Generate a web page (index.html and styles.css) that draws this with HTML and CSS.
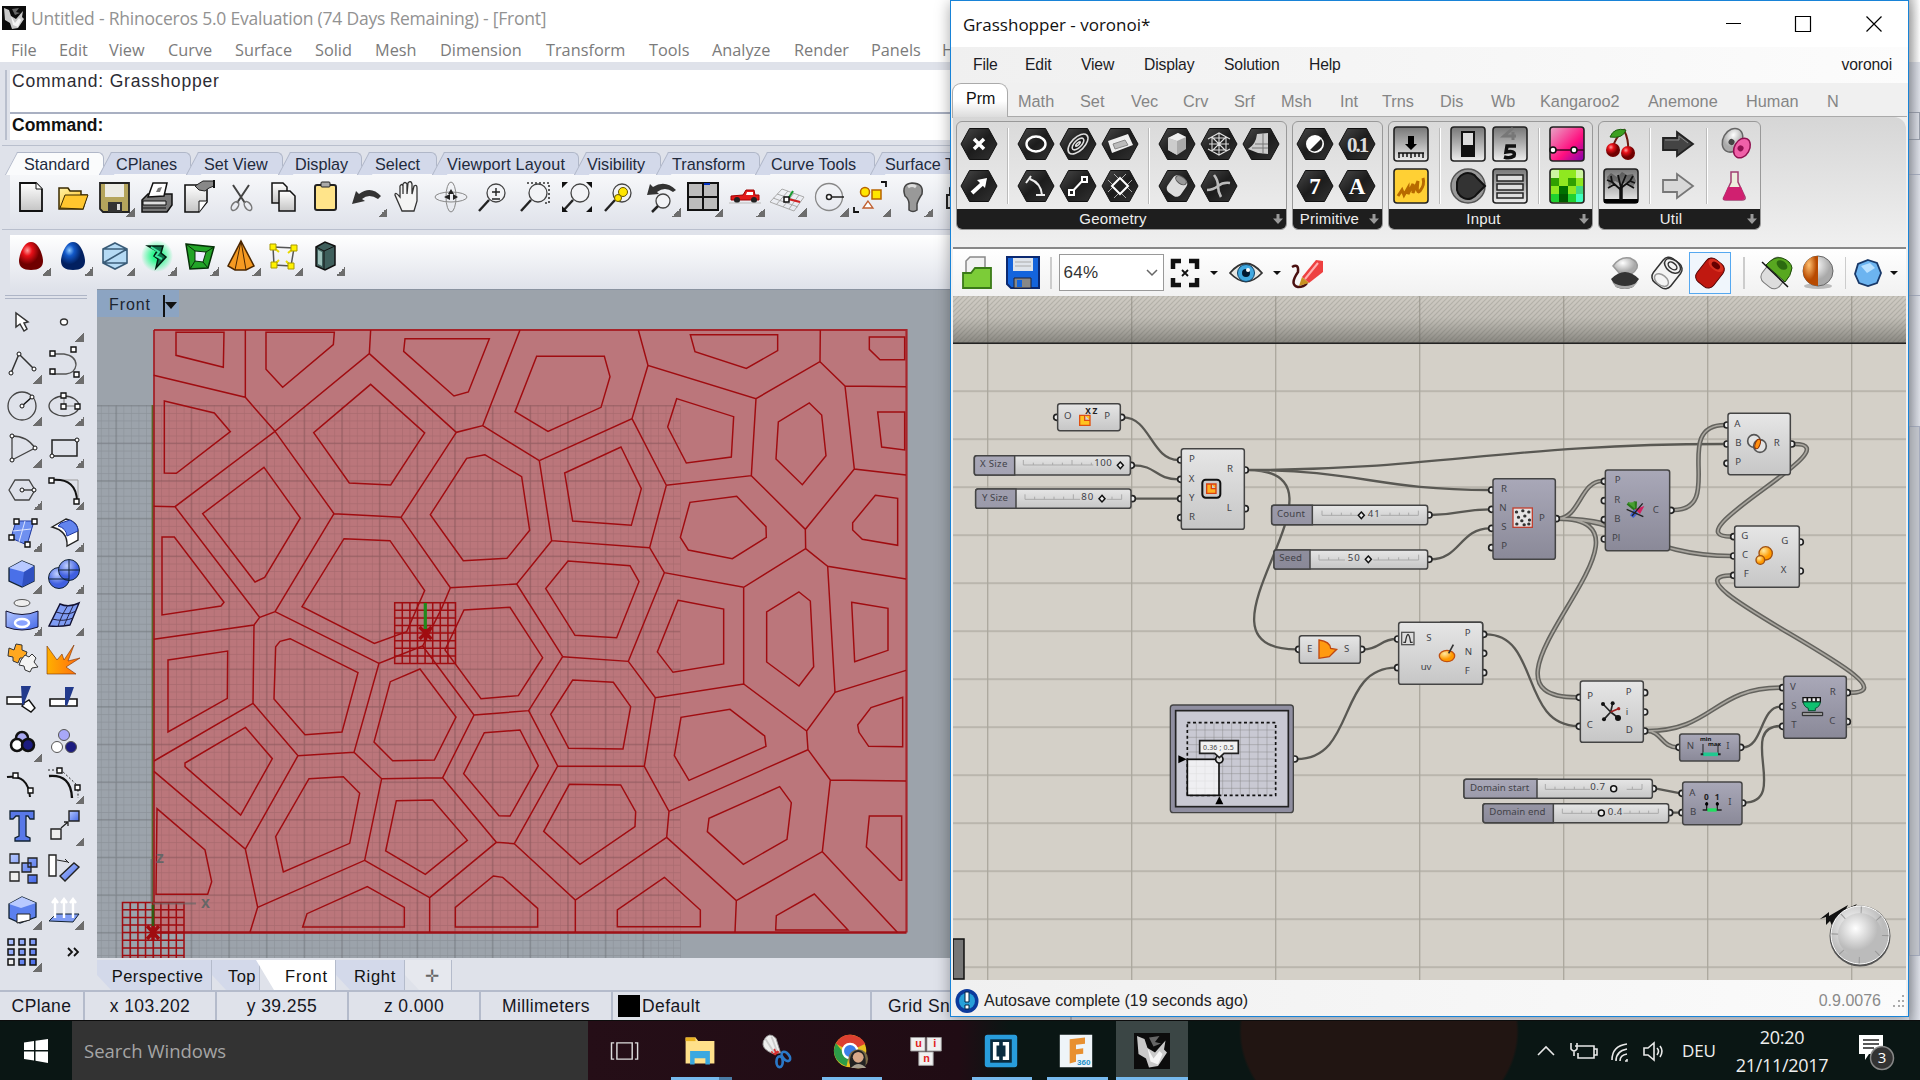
FILE: index.html
```html
<!DOCTYPE html>
<html lang="en">
<head>
<meta charset="utf-8">
<title>Rhinoceros and Grasshopper</title>
<link rel="stylesheet" href="styles.css">
</head>
<body>
<svg class="defs" width="0" height="0">
  <defs>
    <linearGradient id="nodeLight" x1="0" y1="0" x2="0" y2="1"><stop offset="0" stop-color="#e6e6e6"/><stop offset="1" stop-color="#c6c6c6"/></linearGradient>
    <linearGradient id="nodeDark" x1="0" y1="0" x2="0" y2="1"><stop offset="0" stop-color="#a9a8b8"/><stop offset="1" stop-color="#8a8998"/></linearGradient>
    <linearGradient id="hexFill" x1="0" y1="0" x2="1" y2="1"><stop offset="0" stop-color="#4a4a4a"/><stop offset=".5" stop-color="#1c1c1c"/><stop offset="1" stop-color="#333"/></linearGradient>
    <linearGradient id="btnGrey" x1="0" y1="0" x2="0" y2="1"><stop offset="0" stop-color="#777"/><stop offset=".45" stop-color="#aaa"/><stop offset="1" stop-color="#eee"/></linearGradient>
    <linearGradient id="steel" x1="0" y1="0" x2="0" y2="1"><stop offset="0" stop-color="#fff"/><stop offset="1" stop-color="#c4c4c4"/></linearGradient>
    <linearGradient id="blueFace" x1="0" y1="0" x2="1" y2="1"><stop offset="0" stop-color="#b5c8ff"/><stop offset="1" stop-color="#4468e8"/></linearGradient>
    <linearGradient id="gold" x1="0" y1="0" x2="1" y2="1"><stop offset="0" stop-color="#fff2a8"/><stop offset="1" stop-color="#ffb400"/></linearGradient>
    <linearGradient id="flame" x1="0" y1="0" x2="1" y2="0"><stop offset="0" stop-color="#ffb000"/><stop offset="1" stop-color="#ff6a10"/></linearGradient>
    <linearGradient id="pink" x1="0" y1="0" x2="1" y2="1"><stop offset="0" stop-color="#e8a8c8"/><stop offset=".6" stop-color="#ff1080"/><stop offset="1" stop-color="#8000b0"/></linearGradient>
    <radialGradient id="redBall" cx=".35" cy=".3"><stop offset="0" stop-color="#ff9a9a"/><stop offset=".4" stop-color="#e81018"/><stop offset="1" stop-color="#700000"/></radialGradient>
    <radialGradient id="blueBall" cx=".35" cy=".3"><stop offset="0" stop-color="#8cc8ff"/><stop offset=".4" stop-color="#1258c8"/><stop offset="1" stop-color="#022060"/></radialGradient>
    <radialGradient id="softBlue" cx=".4" cy=".3"><stop offset="0" stop-color="#c0d0ff"/><stop offset="1" stop-color="#4060e0"/></radialGradient>
    <radialGradient id="glow"><stop offset=".3" stop-color="#30f890"/><stop offset="1" stop-color="#30f89000"/></radialGradient>
    <radialGradient id="orangeBall" cx=".35" cy=".3"><stop offset="0" stop-color="#ffe9a0"/><stop offset="1" stop-color="#ff9a00"/></radialGradient>
    <radialGradient id="wheel" cx=".4" cy=".35"><stop offset="0" stop-color="#fff"/><stop offset="1" stop-color="#bbb"/></radialGradient>
    <radialGradient id="silver" cx=".4" cy=".3"><stop offset="0" stop-color="#fff"/><stop offset="1" stop-color="#aaa"/></radialGradient>
    <radialGradient id="amber" cx=".4" cy=".3"><stop offset="0" stop-color="#ffc070"/><stop offset="1" stop-color="#b84a00"/></radialGradient>
    <pattern id="minor" x="153.5" y="932.5" width="7.53" height="7.53" patternUnits="userSpaceOnUse"><path d="M0 0H7.53M0 0V7.53" stroke="#000" stroke-opacity=".1" stroke-width="1.2"/></pattern>
    <pattern id="major" x="152.9" y="931.9" width="37.65" height="37.65" patternUnits="userSpaceOnUse"><path d="M0 .8H37.65M.8 0V37.65" stroke="#000" stroke-opacity=".11" stroke-width="1.6"/></pattern>
    <pattern id="canvasGrid" x="987" y="390.5" width="144" height="48" patternUnits="userSpaceOnUse"><path d="M0 .7H144M.7 0V48" stroke="#8d8b80" stroke-opacity=".6" stroke-width="1.3"/></pattern>
    <pattern id="hatch" width="5" height="5" patternUnits="userSpaceOnUse"><path d="M-1 6L6 -1M-1 1L1 -1M4 6L6 4" stroke="#8a8980" stroke-opacity=".35" stroke-width="1.2"/></pattern>
    <linearGradient id="shade" x1="0" y1="0" x2="0" y2="1"><stop offset="0" stop-color="#5a5a55" stop-opacity=".05"/><stop offset=".45" stop-color="#5a5a55" stop-opacity=".14"/><stop offset="1" stop-color="#4a4a45" stop-opacity=".55"/></linearGradient>
    <symbol id="hex" viewBox="-21 -21 42 42"><path d="M-18 0L-9.500-15.500H9.500L18 0L9.500 15.500H-9.500Z" fill="url(#hexFill)" stroke="#111"/></symbol>
    <symbol id="rhino" viewBox="0 0 24 24"><path d="M0 0H24V24H0Z" fill="#0c0c0c"/><path d="M2 2L7 4L9 10L14 13L21 5L20 11L22 13L16 22L10 23L8 17L3 14Z" fill="#c9c9c9"/><path d="M9 10L13 17L17 12L19 14L16 21L11 19Z" fill="#f5f5f5"/><path d="M10 3L17 2L14 6L18 7L13 9Z" fill="#666"/></symbol>
    <symbol id="glass" viewBox="-21 -21 42 42"><circle cx="3" cy="-4" r="9" fill="#f2f3f6" stroke="#444" stroke-width="1.300"/><path d="M-4 3L-14 14" stroke="#222" stroke-width="2.400"/></symbol>
  </defs>
</svg>

<main class="rhino">
  <header class="r-title"><svg width="24" height="24"><use href="#rhino"/></svg><span>Untitled - Rhinoceros 5.0 Evaluation (74 Days Remaining) - [Front]</span></header>
  <nav class="r-menu"><span>File</span><span>Edit</span><span>View</span><span>Curve</span><span>Surface</span><span>Solid</span><span>Mesh</span><span>Dimension</span><span>Transform</span><span>Tools</span><span>Analyze</span><span>Render</span><span>Panels</span><span>Help</span></nav>
  <section class="command"><p>Command: Grasshopper</p><p class="prompt">Command:</p></section>
  <section class="band">
    <div class="r-tabs"><span class="on">Standard</span><span>CPlanes</span><span>Set View</span><span>Display</span><span>Select</span><span>Viewport Layout</span><span>Visibility</span><span>Transform</span><span>Curve Tools</span><span>Surface Tools</span></div>
    <div class="icons">
      <svg viewBox="-21 -21 42 42"><path d="M-11-14H5L11-8V14H-11Z" fill="url(#steel)" stroke="#111" stroke-width="1.800"/><path d="M5-14V-8H11" fill="#fff" stroke="#111"/></svg>
      <svg viewBox="-21 -21 42 42"><path d="M-14-9H-5L-3-6H8V-2L14-2L10 12H-14Z" fill="url(#gold)" stroke="#3a2a00" stroke-width="1.500"/><path d="M-13 11L-8-2H15L10 12Z" fill="#ffc62e" stroke="#3a2a00"/></svg>
      <svg class="more" viewBox="-21 -21 42 42"><path d="M-15-14H14V15H-12L-15 12Z" fill="#b5a55c" stroke="#222" stroke-width="1.800"/><path d="M-10-13H9V0H-10Z" fill="#ecebe4"/><path d="M-7 5H7V15H-7Z" fill="#333"/><path d="M2 7H5V13H2Z" fill="#ddd"/></svg>
      <svg viewBox="-21 -21 42 42"><path d="M-15 3L-9-3H15V8L10 15H-15Z" fill="#777" stroke="#111" stroke-width="1.500"/><path d="M-9 0L-4-14H10L7-1Z" fill="#fff" stroke="#111" stroke-width="1.500"/><path d="M-1-5L1-9L5-10L3-5Z" fill="#777"/><path d="M-14 4H9V8H-14ZM-14 11H9" fill="#ddd" stroke="#111"/></svg>
      <svg viewBox="-21 -21 42 42"><path d="M-14-12H8V5L0 15H-14Z" fill="url(#steel)" stroke="#111" stroke-width="1.600"/><path d="M-4-11L4-16H15V-11L10-9L6-6L0-7Z" fill="#888" stroke="#222"/><path d="M15-17V-9" stroke="#111" stroke-width="2"/><path d="M8 4H0V15" fill="#fff" stroke="#111"/></svg>
      <svg viewBox="-21 -21 42 42"><path d="M-8-12L4 6M8-12L-4 6" stroke="#444" stroke-width="2"/><ellipse cx="-6" cy="9" rx="3" ry="5" transform="rotate(35-6 9)" fill="none" stroke="#777" stroke-width="1.500"/><ellipse cx="7" cy="9" rx="3" ry="5" transform="rotate(-35 7 9)" fill="none" stroke="#777" stroke-width="1.500"/></svg>
      <svg viewBox="-21 -21 42 42"><g fill="url(#steel)" stroke="#111" stroke-width="1.500"><path d="M-11-14H0L4-10V6H-11Z"/><path d="M-4-6H7L12-1V14H-4Z"/></g></svg>
      <svg viewBox="-21 -21 42 42"><rect x="-10" y="-12" width="21" height="25" rx="2" fill="#ffe48a" stroke="#222" stroke-width="2"/><rect x="-4" y="-15" width="9" height="5" rx="1" fill="#aaa" stroke="#222"/></svg>
      <svg class="more" viewBox="-21 -21 42 42"><path d="M-15 7L-11-6L-8-3Q4-12 14-1L11 2Q2-4-5 2L-2 4Z" fill="#333"/></svg>
      <svg viewBox="-21 -21 42 42"><path d="M-7 14L-14-2Q-14-6-9 0V-11Q-7-14-6-11V-3V-13Q-4-16-2-13V-3L-1-14Q2-17 3-13L3-3L5-11Q8-13 8-9L8 4L5 14Z" fill="#f4f4f4" stroke="#333" stroke-width="1.300"/></svg>
      <svg viewBox="-21 -21 42 42"><ellipse rx="16" ry="5" fill="none" stroke="#888"/><ellipse rx="5" ry="15" fill="none" stroke="#888"/><path d="M-7 0L-1-3V3ZM0-8L-3-3H3ZM7 0L2-3V3Z" fill="#222"/></svg>
      <svg viewBox="-21 -21 42 42"><use href="#glass" x="-21" y="-21" width="42" height="42"/><path d="M-1-5H7M3-9V-1M-1 2H7" stroke="#222" stroke-width="1.400"/></svg>
      <svg viewBox="-21 -21 42 42"><use href="#glass" x="-21" y="-21" width="42" height="42"/><path d="M-8-14H14V6H8" fill="none" stroke="#333" stroke-width="1.600" stroke-dasharray="2 2"/></svg>
      <svg viewBox="-21 -21 42 42"><use href="#glass" x="-21" y="-21" width="42" height="42"/><path d="M-15-15H-9L-15-9ZM15-15H9L15-9ZM-15 15V9L-9 15ZM15 15H9L15 9Z" fill="#111"/></svg>
      <svg viewBox="-21 -21 42 42"><use href="#glass" x="-21" y="-21" width="42" height="42"/><circle cx="4" cy="-5" r="4.500" fill="#ffe600" stroke="#665500"/><circle cx="-1" cy="1" r="3.500" fill="#ffe600" stroke="#665500"/></svg>
      <svg class="more" viewBox="-21 -21 42 42"><circle cx="2" cy="4" r="7" fill="#f2f3f6" stroke="#444" stroke-width="1.300"/><path d="M-3 9L-9 15" stroke="#222" stroke-width="2.500"/><path d="M-14-2L-11-13L-8-10Q4-18 15-7L12-5Q4-11-4-5L-2-3Z" fill="#333"/></svg>
      <svg class="more" viewBox="-21 -21 42 42"><path d="M-15-14H15V13H-15Z" fill="#bcbcbc" stroke="#111" stroke-width="2"/><path d="M0-14V13M-15 0H15" stroke="#111" stroke-width="2"/><path d="M1-13H7" stroke="#0030c0" stroke-width="2"/></svg>
      <svg class="more" viewBox="-21 -21 42 42"><path d="M-14 3V-1L-2-2L1-7H9L10-2H14V3Z" fill="#e31b1b" stroke="#a00000"/><path d="M2-5H8V-2H1Z" fill="#fff"/><circle cx="-8" cy="3" r="3" fill="#222"/><circle cx="9" cy="3" r="3" fill="#222"/><path d="M-16 6H16" stroke="#bbb"/></svg>
      <svg class="more" viewBox="-21 -21 42 42"><path d="M-17 5L-5-8L17 0L7 14ZM-14 1L11 10M-10-3L14 5M-11 8L1-6M-4 10L7-4M2 12L12-2" fill="none" stroke="#aaa"/><path d="M1 2L6-6" stroke="#1a9a30" stroke-width="2"/><path d="M1 2L13 5" stroke="#d02020" stroke-width="2"/><path d="M-3 0H2V5H-3Z" fill="#fff" stroke="#111" stroke-width="1.500"/></svg>
      <svg class="more" viewBox="-21 -21 42 42"><circle r="13.500" fill="none" stroke="#888" stroke-width="1.300"/><path d="M0 0H15" stroke="#222" stroke-width="1.500"/><circle r="2.500" fill="#fff" stroke="#222" stroke-width="1.500"/></svg>
      <svg class="more" viewBox="-21 -21 42 42"><circle cx="-6" cy="-5" r="4.500" fill="#ffe600" stroke="#b86400" stroke-width="1.500"/><path d="M1-7H10V2H1Z" fill="#ffe600" stroke="#b86400" stroke-width="1.500"/><path d="M-3 4L-8 11H2Z" fill="#fff" stroke="#c06030" stroke-width="1.300"/><path d="M10-15H15V-10M-12 15H-17V10" fill="none" stroke="#111" stroke-width="1.800"/></svg>
      <svg class="more" viewBox="-21 -21 42 42"><path d="M-4 7Q-4 2-8-1Q-12-13-1-14Q11-14 9-3Q5 3 4 7V13Q0 16-4 13Z" fill="#999" stroke="#444" stroke-width="1.500"/><path d="M-5-10Q-1-13 3-10" stroke="#ddd" stroke-width="3" fill="none"/></svg>
      <svg viewBox="-21 -21 42 42"><path d="M-8-2H8V11H-8ZM-5-2V-9Q0-14 5-9V-2" fill="#ddd" stroke="#222" stroke-width="2"/></svg>
    </div>
  </section>
  <section class="band second">
    <div class="icons">
      <svg class="more" viewBox="-21 -21 42 42"><path d="M0-14C8-14 12 0 12 5C12 11 8 14 0 14S-12 11-12 5C-12 0-8-14 0-14Z" fill="url(#redBall)"/></svg>
      <svg class="more" viewBox="-21 -21 42 42"><path d="M0-14C8-14 12 0 12 5C12 11 8 14 0 14S-12 11-12 5C-12 0-8-14 0-14Z" fill="url(#blueBall)"/></svg>
      <svg class="more" viewBox="-21 -21 42 42"><path d="M0-13L12-7V7L0 13L-12 7V-7ZM-12-7H12M-12 7H12M-12 7L12-7" fill="#b5daf4" stroke="#3a5c78" stroke-width="1.600"/></svg>
      <svg class="more" viewBox="-21 -21 42 42"><circle r="16" fill="url(#glow)"/><path d="M-9-10L6-10L4-3L9 1L-1 12L1 3L-3 0L0-5Z" fill="#0c7048" stroke="#021c10" stroke-width="1.500"/><path d="M-6-9L2-4L-1 0L5 3" fill="none" stroke="#40e8a0" stroke-width="2"/></svg>
      <svg class="more" viewBox="-21 -21 42 42"><path d="M-13-12L15-9L9 12L-9 13Z" fill="#22a428" stroke="#063008" stroke-width="1.500"/><path d="M-4-5L7-4L4 6L-4 5Z" fill="#eef" stroke="#063008"/><path d="M-13-12L-4-5M15-9L7-4M9 12L4 6M-9 13L-4 5" stroke="#063008"/></svg>
      <svg class="more" viewBox="-21 -21 42 42"><path d="M0-15L13 10L5 14H-6L-13 10Z" fill="#f59a22" stroke="#4a2600" stroke-width="1.500"/><path d="M0-15L-6 14M0-15L5 14" stroke="#4a2600"/></svg>
      <svg class="more" viewBox="-21 -21 42 42"><path d="M-10-9L11-8L8 10L-9 9Z" fill="none" stroke="#555" stroke-width="1.500"/><path d="M-10-9L-4-4M11-8L5-3M8 10L3 5M-9 9L-4 4" stroke="#e8d800" stroke-width="2"/><path d="M-13-12H-7V-6H-13ZM8-11H14V-5H8ZM5 7H11V13H5ZM-12 6H-6V12H-12Z" fill="#fff200" stroke="#a89800"/></svg>
      <svg class="more" viewBox="-21 -21 42 42"><path d="M-9-9L0-14L10-10V9L0 14L-9 10Z" fill="#3f5f5c" stroke="#111" stroke-width="1.500"/><path d="M-9-9L-1-5V14M-1-5L10-10" stroke="#111" fill="none"/><path d="M-7-6L-3-4V10L-7 8Z" fill="#9cc0ba"/></svg>
    </div>
  </section>
  <div class="work">
    <aside class="palette">
      <svg viewBox="-21 -21 42 42"><path d="M-6-9L-6 5L-2 2L2 9L5 7L2 1L6 0Z" fill="#fff" stroke="#333" stroke-width="1.500"/></svg>
      <svg class="more" viewBox="-21 -21 42 42"><ellipse rx="3.500" ry="3" fill="#fff" stroke="#333" stroke-width="1.400"/></svg>
      <svg class="more" viewBox="-21 -21 42 42"><path d="M-11 9L-3-10L12 5" fill="none" stroke="#333" stroke-width="1.500"/><g fill="#fff" stroke="#111"><circle cx="-11" cy="9" r="2"/><circle cx="-3" cy="-10" r="2"/><circle cx="12" cy="5" r="2"/></g></svg>
      <svg class="more" viewBox="-21 -21 42 42"><path d="M-12-10H0Q12-8 12 1Q11 9 2 10H-12" fill="none" stroke="#555" stroke-width="1.300"/><path d="M-14-13H-9V-8H-14ZM7-17H12V-12H7ZM-14 5H-9V10H-14ZM10 8H15V13H10Z" fill="#fff" stroke="#111" stroke-width="1.400"/></svg>
      <svg class="more" viewBox="-21 -21 42 42"><circle r="14" fill="none" stroke="#444" stroke-width="1.300"/><path d="M0 0L10-9" stroke="#111" stroke-width="1.500"/><circle r="2" fill="#fff" stroke="#111"/><circle cx="10" cy="-9" r="2" fill="#fff" stroke="#111"/></svg>
      <svg class="more" viewBox="-21 -21 42 42"><ellipse rx="15" ry="10" fill="none" stroke="#444" stroke-width="1.300"/><path d="M0-10V0H14" stroke="#777" fill="none"/><path d="M-3-13H2V-8H-3ZM-3-2H2V3H-3ZM11-2H16V3H11Z" fill="#fff" stroke="#111" stroke-width="1.300"/></svg>
      <svg class="more" viewBox="-21 -21 42 42"><path d="M-10-12V12L13 0Q5-12-10-12" fill="none" stroke="#444" stroke-width="1.300"/><g fill="#fff" stroke="#111"><circle cx="-10" cy="-12" r="2"/><circle cx="-10" cy="12" r="2"/><circle cx="13" cy="0" r="2"/></g></svg>
      <svg class="more" viewBox="-21 -21 42 42"><path d="M-12-8H13V8H-12Z" fill="none" stroke="#222" stroke-width="1.500"/><circle cx="13" cy="-8" r="2" fill="#fff" stroke="#111"/><circle cx="-12" cy="8" r="2" fill="#fff" stroke="#111"/></svg>
      <svg class="more" viewBox="-21 -21 42 42"><path d="M-13 0L-7-10H7L13 0L7 10H-7ZM0 0H12" fill="none" stroke="#444" stroke-width="1.300"/><circle r="2" fill="#fff" stroke="#111"/><circle cx="12" r="2" fill="#fff" stroke="#111"/></svg>
      <svg class="more" viewBox="-21 -21 42 42"><path d="M-12-10H14V12" fill="none" stroke="#999"/><path d="M-12-10Q13-12 13 12" fill="none" stroke="#111" stroke-width="2"/><path d="M-15-12H-10V-7H-15ZM10 9H15V14H10Z" fill="#fff" stroke="#111" stroke-width="1.400"/></svg>
      <svg class="more" viewBox="-21 -21 42 42"><path d="M-6-11H12L5 13L-11 6Z" fill="#6f90f0" stroke="#2038a0"/><path d="M3-11L-3 10M9-3L-9-1" stroke="#dce4ff"/><path d="M-8-13H-3V-8H-8ZM10-13H15V-8H10ZM3 10H8V15H3ZM-13 3H-8V8H-13Z" fill="#fff" stroke="#111" stroke-width="1.400"/></svg>
      <svg class="more" viewBox="-21 -21 42 42"><path d="M-12-5L2-13Q14-10 14 0V8L3 14Q4-1-12-5Z" fill="#fff" stroke="#222" stroke-width="1.400"/><path d="M-3-9L6-12Q14-8 14-1L3 4Q2-4-6-6Z" fill="#6284ee" stroke="#2038a0"/></svg>
      <svg class="more" viewBox="-21 -21 42 42"><path d="M-13-6L0-13L12-8V7L0 13L-13 7Z" fill="#4a70e8" stroke="#123" stroke-width="1.300"/><path d="M-13-6L0-13L12-8L2-2Z" fill="#b8c9ff"/><path d="M2-2L12-8V7L0 13Z" fill="#2f50c0"/></svg>
      <svg class="more" viewBox="-21 -21 42 42"><circle cx="-5" cy="4" r="10.500" fill="url(#softBlue)" stroke="#123"/><circle cx="5" cy="-4" r="10.500" fill="url(#softBlue)" stroke="#123"/><path d="M-5-4H15M5-14V6M-15 5H5" stroke="#123" fill="none"/></svg>
      <svg class="more" viewBox="-21 -21 42 42"><ellipse cy="-13" rx="8" ry="3.500" fill="#eee" stroke="#555"/><path d="M-16-5Q0 2 16-5V11Q0 17-16 11Z" fill="url(#blueFace)" stroke="#113"/><ellipse cy="7" rx="7" ry="4" fill="#8aa4ff" stroke="#fff" stroke-width="2.500"/></svg>
      <svg class="more" viewBox="-21 -21 42 42"><path d="M-4-12Q5-8 15-13L6 9Q-4 11-15 10Z" fill="#7f9cf4" stroke="#113" stroke-width="1.400"/><path d="M4-11Q-4 2-6 11M10-12Q3 2 0 10M-8-4Q4 0 12-5M-12 3Q0 6 9 2" stroke="#224" fill="none"/></svg>
      <svg viewBox="-21 -21 42 42"><path d="M-13-10L-8-8L-6-14L0-13L0-8L5-6L3 0L-2 0L-4 5L-9 3L-9-1L-14-2Z" fill="#ffa820" stroke="#333"/><path d="M-1 2L3-3L7-1L10-4L14 0L12 4L16 9L10 10L8 14L3 12L2 8L-3 7Z" fill="#f4f4f4" stroke="#333"/></svg>
      <svg viewBox="-21 -21 42 42"><path d="M-17 16V-12L-7 2L-2-4L0 2L10-13L4 3L16 0L2 9L12 16Z" fill="url(#flame)" stroke="#7a3000" stroke-width=".600"/></svg>
      <svg viewBox="-21 -21 42 42"><path d="M-15-3H2V4H-15ZM2 3L7 0L13 8L9 12L0 6Z" fill="#fff" stroke="#111" stroke-width="1.400"/><path d="M-1-14H9L1 6L0 3Z" fill="#223a8c"/></svg>
      <svg viewBox="-21 -21 42 42"><path d="M-14-1H13V6H-14Z" fill="#fff" stroke="#111" stroke-width="1.600"/><path d="M1-13H10L3 6L1 5Z" fill="#223a8c"/></svg>
      <svg class="more" viewBox="-21 -21 42 42"><g stroke="#111" stroke-width="2.500"><circle cy="-4" r="6" fill="#a8a8f0"/><circle cx="-5" cy="3" r="6" fill="#fff"/><circle cx="6" cy="3" r="6" fill="#1c1c80"/></g></svg>
      <svg viewBox="-21 -21 42 42"><g stroke="#555"><circle cy="-7" r="5.500" fill="#a8a8f8"/><circle cx="-7" cy="5" r="5.500" fill="#fff"/><circle cx="7" cy="5" r="5.500" fill="#1c1c80"/></g></svg>
      <svg viewBox="-21 -21 42 42"><path d="M-15-7Q6-10 8 13" fill="none" stroke="#111" stroke-width="2"/><path d="M-9-11H-4V-6H-9ZM6 4H11V9H6Z" fill="#fff" stroke="#111" stroke-width="1.400"/></svg>
      <svg class="more" viewBox="-21 -21 42 42"><path d="M-15-8Q7-10 8 14" fill="none" stroke="#111" stroke-width="2.400"/><path d="M-16-14H-3L14 2V14" fill="none" stroke="#222" stroke-dasharray="2 2"/><path d="M-7-16H-2V-11H-7ZM11 1H16V6H11Z" fill="#fff" stroke="#111" stroke-width="1.400"/></svg>
      <svg viewBox="-21 -21 42 42"><path d="M-12-15H12V-7H8L6-10H4V10L8 12V15H-7V12L-3 10V-10H-6L-9-7H-12Z" fill="#5878e8" stroke="#123" stroke-width="1.300"/></svg>
      <svg class="more" viewBox="-21 -21 42 42"><path d="M-13 3H-3V13H-13Z" fill="#eee" stroke="#222" stroke-width="1.400"/><path d="M5-15H15V-5H5Z" fill="url(#blueFace)" stroke="#222" stroke-width="1.400"/><path d="M-3 2L4-4M0-4H4V0" stroke="#222" stroke-width="1.300" fill="none"/></svg>
      <svg viewBox="-21 -21 42 42"><g fill="url(#blueFace)" stroke="#222" stroke-width="1.300"><path d="M-12-14H-3V-5H-12ZM6-10H15V-1H6ZM0-5H9V4H0ZM6 7H15V15H6Z"/><path d="M-12 4H-3V13H-12Z" fill="#eee"/></g></svg>
      <svg viewBox="-21 -21 42 42"><path d="M-15-13H-8V8H-15Z" fill="#fff" stroke="#222" stroke-width="1.400"/><path d="M-4 8L10-5L15-1L1 13Z" fill="url(#blueFace)" stroke="#222" stroke-width="1.400"/><path d="M-7-8L4-6M1-9L5-5" stroke="#222"/></svg>
      <svg class="more" viewBox="-21 -21 42 42"><path d="M-13-6L0-13L14-7V7L-2 13L-13 8Z" fill="#5c80ee" stroke="#123" stroke-width="1.300"/><path d="M-13-6L0-13L14-7L-1-2Z" fill="#b8c9ff"/><path d="M-5 4H8V10L-5 13Z" fill="#fff" stroke="#222"/></svg>
      <svg class="more" viewBox="-21 -21 42 42"><path d="M-15 11L-8 4H15L9 12Z" fill="#7f9cf4" stroke="#123"/><path d="M-9 8V-11M0 8V-11M9 8V-11M-12-7L-9-11L-6-7M-3-7L0-11L3-7M6-7L9-11L12-7" stroke="#fff" stroke-width="2.400" fill="none"/></svg>
      <svg class="more" viewBox="-21 -21 42 42"><g fill="url(#blueFace)" stroke="#111" stroke-width="1.500"><path d="M-14-13H-8V-7H-14ZM-3-13H3V-7H-3ZM8-13H14V-7H8ZM-14-3H-8V3H-14ZM-3-3H3V3H-3ZM8-3H14V3H8ZM-3 7H3V13H-3ZM8 7H14V13H8Z"/><path d="M-14 7H-8V13H-14Z" fill="#eee"/></g></svg>
      <svg viewBox="-21 -21 42 42"><path d="M4-4L8 0L4 4M10-4L14 0L10 4" stroke="#111" stroke-width="1.800" fill="none"/></svg>
    </aside>
    <div class="stage">
      <div class="view-label"><span>Front</span><i></i></div>
      <svg class="viewport" viewBox="97 290 854 668" width="854" height="668">
        <rect x="153.500" y="330" width="753" height="602.500" fill="#bb767b"/>
        <rect x="97" y="405" width="583.500" height="553" fill="url(#minor)"/>
        <rect x="97" y="405" width="583.500" height="553" fill="url(#major)"/>
        <path d="M152.500 405V932" stroke="#5c6428" stroke-width="1.800"/>
        <path d="M154 330H906.500V932.500" fill="none" stroke="#a8242a" stroke-width="2.200"/><path d="M154 330V932.500" stroke="#a01218" stroke-width="1.500"/><path d="M154 932.500H906.500" stroke="#a01218" stroke-width="2.600"/>
        <g class="cells">
          <g transform="translate(140 310) scale(.33333)">
            <path d="M41 196L316 262V60M316 262L405 364L688 131L692 60M688 131L949 367L1028 347L1140 60M1028 347L1198 452M405 364L105 590L41 589M405 364L582 611L783 622L949 367M582 611L405 905L359 922L105 590M359 922L342 945L41 988M405 905L717 1060M783 622L931 833L1130 822M931 833L905 895L848 1008"/>
            <path d="M108 67H252L250 172L108 136ZM378 67H583L580 104L428 232L378 178ZM795 86H1048L985 246L942 258L791 124ZM692 223L854 369L752 525L628 519L521 368ZM73 273L223 309L271 365L109 490L73 489ZM372 472L481 624L374 802L345 816L188 611ZM66 681H103L252 877L243 888L66 915ZM612 686L750 692L854 842L800 965L703 1000L486 890ZM1034 434L1145 500L1169 661L1101 745L970 752L871 614L980 445Z"/>
          </g>
          <g transform="translate(520 310) scale(.33333)">
            <path d="M355 60L384 166L708 266L900 155L901 60M384 166L336 326L58 452M900 155L975 228L1158 230M708 266L694 497L439 526L336 326M975 228L1003 477L1158 495M1003 477L856 658L694 497M856 658L857 716L671 832L433 788L389 713L439 526M857 716L923 769L1158 807M58 452L95 692L389 713M95 692L-10 822L128 1040M671 832V1122M923 769L945 1147M433 788L325 1054"/>
            <path d="M50 139H253L270 200L243 292L84 364L-15 305ZM511 74H773V122L679 175L525 125ZM1048 81H1154V149H1080L1048 118ZM470 266L641 320L634 441L499 459L443 351ZM868 279L905 315L918 437L847 524L768 447L775 336ZM1073 306H1154V420L1085 411ZM303 411L364 536L334 646L158 633L134 489ZM650 559L738 650L739 682L637 746L505 720L481 682L510 577ZM1066 556L1133 565V706L1027 688L998 660V638ZM144 753L330 767L357 815L290 983L165 976L77 836ZM474 871L611 897V1062L459 1087L412 1026ZM837 846L871 873L881 1070L837 1128L740 1056V906ZM995 877L1104 895V1021L1004 1055Z"/>
          </g>
          <g transform="translate(90 630) scale(.33333)">
            <path d="M492-15L489 220L624 377L792 367L875 446L1058 443L1152 255L998 48L867 100L792 367M192 393L489 220M192 424L466 657L624 377M466 657L503 832L480 907M503 832L824 691L875 446M824 691L1019 803V907M1019 803L1219 637L1273 641M1058 443L1219 637M1152 255L1316 242L1418 80"/>
            <path d="M1122-60L1260-68L1358 83L1285 197L1173 206L1065 60ZM234 90L413 63L412 205L234 306ZM600 26L804 128L756 306L645 314L552 207L557 50L570 34ZM990 117L1098 261L1033 390L908 392L852 336L901 155ZM466 292L547 386L452 555L285 410V399ZM657 446L760 440L809 490L779 640L580 726L557 620ZM919 512L1028 510L1132 631L1006 733L887 663ZM1183 308L1290 300L1345 407L1260 558L1227 557L1121 431ZM201 536L345 660L365 755L353 793H198ZM832 770L943 832V891H638L651 851ZM1210 738L1238 742L1343 835V891H1096V832Z"/>
          </g>
          <g transform="translate(520 630) scale(.33333)">
            <path d="M128 80L325 94L406 203L671 162L860 303L945 187L1158 121M406 203L373 409L113 408M26 242L113 408L-17 641M373 409L447 544L864 359L860 303M864 359L931 450L1158 453M931 450L907 665L649 812L440 622L447 544M440 622L166 810L-17 641M166 810V907M649 812L645 907M907 665L1132 907"/>
            <path d="M158 150L280 157L332 230L309 357L146 355L92 253ZM148 463L302 465L347 545L345 590L180 703L71 604ZM433 742L541 840V890H292V840ZM630 238L734 318L738 349L507 451L463 377L483 262ZM779 470L814 518L801 628L670 703L562 605L567 565ZM1148 202V350L1046 349L1017 307L1013 285L1053 233ZM1048 558H1145V751H1138L1039 651ZM883 792L984 900H767L769 857Z"/>
          </g>
          <path d="M394.700 602.700h60.800v60.800h-60.800zM402.300 602.700v60.800M409.900 602.700v60.800M417.500 602.700v60.800M425.100 602.700v60.800M432.700 602.700v60.800M440.300 602.700v60.800M447.900 602.700v60.800M394.700 610.300h60.800M394.700 617.900h60.800M394.700 625.500h60.800M394.700 633.100h60.800M394.700 640.700h60.800M394.700 648.300h60.800M394.700 655.900h60.800"/>
          <path d="M122.500 902.500h61.500v56h-61.500zM130.200 902.500v56M137.900 902.500v56M145.500 902.500v56M153.200 902.500v56M160.900 902.500v56M168.600 902.500v56M176.300 902.500v56M122.500 909.700h61.500M122.500 917.400h61.500M122.500 925h61.500M122.500 932.600h61.500M122.500 940.300h61.500M122.500 948h61.500M122.500 955.500h61.500"/>
          <path d="M419.500 627L431.500 639M431.500 627L419.500 639M425.500 626V640M147 926L159 939M159 926L147 939M153 926V940" stroke-width="3.500"/>
        </g>
        <path d="M425.300 603V629" stroke="#208a1c" stroke-width="3.200"/>
        <path d="M153 905V926" stroke="#2f5c10" stroke-width="2.500"/>
        <path d="M151.500 859V903M153 903.500H196" stroke="#666" stroke-opacity=".65" stroke-width="2" fill="none"/>
        <text x="156" y="863" class="axis">z</text><text x="201" y="908" class="axis">x</text>
      </svg>
    </div>
  </div>
  <div class="view-tabs"><span>Perspective</span><span>Top</span><span class="on">Front</span><span>Right</span><span class="plus">✛</span></div>
  <footer class="r-status"><span>CPlane</span><span>x 103.202</span><span>y 39.255</span><span>z 0.000</span><span>Millimeters</span><span class="layer"><i></i>Default</span><span class="snap">Grid Snap</span></footer>
</main>

<div class="edge"><i></i><i></i><i></i><i></i></div>

<section class="gh">
  <header class="g-title"><span>Grasshopper - voronoi*</span>
    <svg width="160" height="20" fill="none" stroke="#000" stroke-width="1.200"><path d="M1 9.500H16M70.500 2.500H85.500V17.500H70.500ZM141.500 2.500L156.500 17.500M156.500 2.500L141.500 17.500"/></svg></header>
  <nav class="g-menu"><span>File</span><span>Edit</span><span>View</span><span>Display</span><span>Solution</span><span>Help</span><b>voronoi</b></nav>
  <div class="g-tabs"><span class="on">Prm</span><span>Math</span><span>Set</span><span>Vec</span><span>Crv</span><span>Srf</span><span>Msh</span><span>Int</span><span>Trns</span><span>Dis</span><span>Wb</span><span>Kangaroo2</span><span>Anemone</span><span>Human</span><span>N</span></div>
  <div class="ribbon">
    <div class="panel"><div class="groups">
      <div class="group">
        <svg viewBox="-21 -21 42 42"><use href="#hex" x="-21" y="-21" width="42" height="42"/><path d="M-5-5L5 5M5-5L-5 5" stroke="#fff" stroke-width="3.500"/></svg>
        <svg viewBox="-21 -21 42 42"><use href="#hex" x="-21" y="-21" width="42" height="42"/><path d="M-7 7L4-3" stroke="#fff" stroke-width="4"/><path d="M8-8L6 2L-2-6Z" fill="#fff"/></svg>
      </div>
      <div class="group">
        <svg viewBox="-21 -21 42 42"><use href="#hex" x="-21" y="-21" width="42" height="42"/><ellipse rx="9.500" ry="7.500" fill="none" stroke="#fff" stroke-width="2.400"/></svg>
        <svg viewBox="-21 -21 42 42"><use href="#hex" x="-21" y="-21" width="42" height="42"/><path d="M-6-7Q5-3 6 9M0 9H9M-10-3L-5-10" fill="none" stroke="#eee" stroke-width="2"/></svg>
        <svg viewBox="-21 -21 42 42"><use href="#hex" x="-21" y="-21" width="42" height="42"/><g transform="rotate(-45)" fill="none" stroke="#ddd" stroke-width="1.600"><ellipse rx="12.500" ry="6.500"/><ellipse rx="7.500" ry="3.500"/><ellipse rx="3" ry="1"/></g></svg>
        <svg viewBox="-21 -21 42 42"><use href="#hex" x="-21" y="-21" width="42" height="42"/><path d="M-8 8L7-8" stroke="#fff" stroke-width="2"/><path d="M-9 4H-4V9H-9ZM4-9H9V-4H4Z" fill="#222" stroke="#fff" stroke-width="2"/></svg>
        <svg viewBox="-21 -21 42 42"><use href="#hex" x="-21" y="-21" width="42" height="42"/><path d="M-12-3L8-10L13 1L-8 9Z" fill="#eee"/><path d="M-7 0L5-4L8 1L-5 5Z" fill="#bbb" stroke="#888"/></svg>
        <svg viewBox="-21 -21 42 42"><use href="#hex" x="-21" y="-21" width="42" height="42"/><path d="M-12-6L6 12M-6-12L12 6M12-6L-6 12M6-12L-12 6" stroke="#aaa" stroke-width="1"/><path d="M0-8L8 0L0 8L-8 0Z" fill="#222" stroke="#fff" stroke-width="2"/></svg>
      </div>
      <div class="group">
        <svg viewBox="-21 -21 42 42"><use href="#hex" x="-21" y="-21" width="42" height="42"/><path d="M-9-6L1-11L9-7V5L0 11L-9 6Z" fill="#aaa"/><path d="M-9-6L1-11L9-7L0-3Z" fill="#eee"/><path d="M-9-6L0-3V11L-9 6Z" fill="#ccc"/></svg>
        <svg viewBox="-21 -21 42 42"><use href="#hex" x="-21" y="-21" width="42" height="42"/><g transform="rotate(35)"><rect x="-8" y="-10" width="16" height="20" rx="5" fill="#ddd"/><ellipse cy="-7" rx="6" ry="3.500" fill="#999" stroke="#555"/></g></svg>
        <svg viewBox="-21 -21 42 42"><use href="#hex" x="-21" y="-21" width="42" height="42"/><path d="M-10 0H10M0-11V11M-7-7L7 7M7-7L-7 7M-7-6H7V6H-7ZM-11-5L0-11L11-5M11 5L0 11L-11 5" fill="none" stroke="#ddd" stroke-width="1.100"/></svg>
        <svg viewBox="-21 -21 42 42"><use href="#hex" x="-21" y="-21" width="42" height="42"/><path d="M-5-11Q-1-6-1 0Q4-4 11-3M-1 0Q-6 4-12 4M-1 0Q-1 6 2 11" fill="none" stroke="#bbb" stroke-width="2.600"/></svg>
        <svg viewBox="-21 -21 42 42"><use href="#hex" x="-21" y="-21" width="42" height="42"/><path d="M-4-10L7-11V10L-3 9L-13 5Q-5 0-4-10Z" fill="#ccc"/><path d="M2-11V10M-6 0H7M-9 4H7" stroke="#777"/></svg>
      </div></div><footer>Geometry<i></i></footer></div>
    <div class="panel"><div class="groups"><div class="group">
        <svg viewBox="-21 -21 42 42"><use href="#hex" x="-21" y="-21" width="42" height="42"/><circle r="9" fill="#fff"/><path d="M6-5A8 8 0 0 1-5 6Z" fill="#222"/></svg>
        <svg viewBox="-21 -21 42 42"><use href="#hex" x="-21" y="-21" width="42" height="42"/><text class="glyph" y="8">7</text></svg>
        <svg viewBox="-21 -21 42 42"><use href="#hex" x="-21" y="-21" width="42" height="42"/><text class="glyph slim" y="8">0.1</text></svg>
        <svg viewBox="-21 -21 42 42"><use href="#hex" x="-21" y="-21" width="42" height="42"/><text class="glyph" y="8">A</text></svg>
      </div></div><footer>Primitive<i></i></footer></div>
    <div class="panel"><div class="groups">
      <div class="group">
        <svg viewBox="-21 -21 42 42"><rect class="key" x="-17" y="-17" width="34" height="34" rx="3"/><path d="M0 6L-6 0H-3V-8H3V0H6Z" fill="#000"/><path d="M-13 9H13M-12 9V14M-8 9V13M-4 9V13M0 9V14M4 9V13M8 9V13M12 9V14" stroke="#111" stroke-width="1.500"/></svg>
        <svg viewBox="-21 -21 42 42"><rect x="-17" y="-17" width="34" height="34" rx="3" fill="#ffd034" stroke="#222" stroke-width="1.600"/><path d="M-13 10L-9 4L-7 9L-3 2L-3 8L2-2V7L7-5Q5 9 9 5Q14-1 12-8" fill="none" stroke="#b86a00" stroke-width="3"/></svg>
      </div>
      <div class="group">
        <svg viewBox="-21 -21 42 42"><rect class="key" x="-17" y="-17" width="34" height="34" rx="3"/><rect x="-7" y="-13" width="14" height="26" fill="#111"/><rect x="-5" y="-11" width="10" height="12" fill="#ddd"/></svg>
        <svg viewBox="-21 -21 42 42"><circle r="17" fill="#999" stroke="#555" stroke-width="1.500"/><path d="M-11 0A11 11 0 0 1 9-8L17 0L9 8A11 11 0 0 1-11 0Z" fill="#333" stroke="#111" stroke-width="2"/></svg>
        <svg viewBox="-21 -21 42 42"><rect class="key" x="-17" y="-17" width="34" height="34" rx="3"/><path d="M3-16L-6-8H6M3-12V-4" stroke="#777" stroke-width="3" fill="none"/><path d="M6 2H-3L-4 8Q6 6 4 12Q0 15-6 13" stroke="#111" stroke-width="3.500" fill="none"/></svg>
        <svg viewBox="-21 -21 42 42"><rect class="key" x="-17" y="-17" width="34" height="34" rx="3"/><path d="M-13-11H13V-5H-13ZM-13-2H13V4H-13ZM-13 7H13V12H-13Z" fill="#ddd" stroke="#222" stroke-width="1.500"/></svg>
      </div>
      <div class="group">
        <svg viewBox="-21 -21 42 42"><rect x="-17" y="-17" width="34" height="34" rx="3" fill="url(#pink)" stroke="#222" stroke-width="1.600"/><path d="M-17 6H17" stroke="#400020" stroke-width="1.500"/><circle cx="-14" cy="6" r="3" fill="#fff" stroke="#111" stroke-width="1.500"/><circle cx="7" cy="6" r="3" fill="#fff" stroke="#111" stroke-width="1.500"/></svg>
        <svg viewBox="-21 -21 42 42"><rect x="-17" y="-17" width="34" height="34" rx="3" fill="#8fe820"/><path d="M-16-16H-8V-8H-16ZM9-16H16V-8H9Z" fill="#cdf5a0"/><path d="M-16-8H-8V0H-16ZM1-8H9V0H1Z" fill="#30a000"/><path d="M-8 0H1V8H-8Z" fill="#007000"/><path d="M-16 8H-8V16H-16ZM1 8H9V16H1Z" fill="#20d030"/><path d="M9 0H16V8H9Z" fill="#40d880"/><path d="M9 8H16V16H9Z" fill="#40ffc0"/><path d="M-8 8H1V16H-8Z" fill="#005800"/><rect x="-17" y="-17" width="34" height="34" rx="3" fill="none" stroke="#222" stroke-width="1.600"/></svg>
      </div></div><footer>Input<i></i></footer></div>
    <div class="panel"><div class="groups">
      <div class="group">
        <svg viewBox="-21 -21 42 42"><path d="M-8 3Q-6-6 3-14Q8-4 7 6" fill="none" stroke="#6a1a10" stroke-width="2"/><path d="M-11-7Q-7-17 5-14Q2-5-11-7Z" fill="#3ca020" stroke="#1c5c10"/><circle cx="-8" cy="6" r="7" fill="url(#redBall)"/><circle cx="7" cy="9" r="7" fill="url(#redBall)"/></svg>
        <svg viewBox="-21 -21 42 42"><rect class="key" x="-17" y="-17" width="34" height="34" rx="3"/><path d="M-17 13H17V17H-17Z" fill="#000"/><path d="M0 14V1" stroke="#111" stroke-width="3.500"/><path d="M0 4L-9-4M0 2L9-5M0 2L-3-11M0 1L5-11M-9-4L-14-6M9-5L14-3M-9-4L-10-10M9-5L12-10M-6-2L-13 2M6-2L13 2" stroke="#111" stroke-width="1.800"/><path d="M-14-9L-10-13L-4-9L1-14L6-11L12-12L15-5L12 1L6-4L0-2L-6-5L-12 0Z" fill="#111" opacity=".35"/></svg>
      </div>
      <div class="group">
        <svg viewBox="-21 -21 42 42"><path d="M-15-6H-1V-12L15 0L-1 12V6H-15Z" fill="#444" stroke="#222" stroke-width="1.800"/><path d="M-13-4H1V-8L10-1" stroke="#888" fill="none"/></svg>
        <svg viewBox="-21 -21 42 42"><path d="M-15-6H-1V-12L15 0L-1 12V6H-15Z" fill="#d8d8d8" stroke="#777" stroke-width="1.800"/></svg>
      </div>
      <div class="group">
        <svg viewBox="-21 -21 42 42"><g transform="translate(0 0) rotate(30)"><ellipse cx="-4" cy="-2" rx="9.500" ry="12.500" fill="url(#silver)" stroke="#666" stroke-width="1.500"/><circle cx="-4" cy="0" r="3" fill="#444"/><ellipse cx="8" cy="0" rx="7.500" ry="10.500" fill="#f060a8" stroke="#901050" stroke-width="1.500"/><circle cx="7" cy="1" r="3" fill="#901050"/></g></svg>
        <svg viewBox="-21 -21 42 42"><path d="M-4-14H3V-4L10 11Q11 14 7 14H-9Q-13 14-11 11L-4-4Z" fill="#eed" stroke="#a04070" stroke-width="1.500"/><path d="M-7 1H6L10 12Q9 14 7 14H-9Q-13 14-11 11Z" fill="#d02070"/></svg>
      </div></div><footer>Util<i></i></footer></div>
  </div>
  <div class="g-tools">
    <svg viewBox="-21 -21 42 42"><path d="M-11 6V-12L-7-16H8V6" fill="#f2f2f2" stroke="#888" stroke-width="1.500"/><path d="M-14 0H-6L-2-5L14-5V15H-14Z" fill="#7ccc38" stroke="#3a7a18" stroke-width="1.800"/></svg>
    <svg viewBox="-21 -21 42 42"><path d="M-16-16H16V15H-12L-16 11Z" fill="#1464dc" stroke="#0a2870" stroke-width="2"/><path d="M-10-15H10V-2H-10Z" fill="#dfe4ea"/><path d="M-8-11H8M-8-7H8" stroke="#aaa"/><path d="M-9 5H8V15H-9Z" fill="#888" stroke="#223"/><path d="M-6 7H-1V14H-6Z" fill="#1464dc"/></svg>
    <i class="bar first"></i>
    <div class="combo">64%<svg width="12" height="8"><path d="M1 1L6 6L11 1" fill="none" stroke="#666" stroke-width="1.500"/></svg></div>
    <svg viewBox="-21 -21 42 42"><path d="M-12-4V-12H-4M4-12H12V-4M12 5V12H4M-4 12H-12V5" fill="none" stroke="#111" stroke-width="4.500"/><path d="M-3-3L3 3M3-3L-3 3" stroke="#111" stroke-width="1.800"/></svg><b class="drop"></b>
    <svg class="eye" viewBox="-21 -21 42 42"><path d="M-16 0Q0-19 16 0Q0 17-16 0Z" fill="#e8e8e4" stroke="#333" stroke-width="1.800"/><circle r="8.500" fill="#40a8e0" stroke="#124468"/><circle r="4" fill="#001830"/><circle cx="2" cy="-3" r="2" fill="#fff"/></svg><b class="drop"></b>
    <svg class="pen" viewBox="-21 -21 42 42"><path d="M-15-6Q-8-10-9-1Q-18 12-9 14Q-3 14 0 10" stroke="#4a1010" stroke-width="2.500" fill="none"/><path d="M-5 4L9-13L16-12V-1L2 10Z" fill="#ee4040"/><path d="M-2 6L11-10" stroke="#ffb0b0" stroke-width="2"/><path d="M-8 13L-5 4L2 10Z" fill="#c89020"/></svg>
    <i class="space"></i>
    <svg viewBox="-21 -21 42 42"><path d="M-12-7Q-5-17 5-15Q14-11 12-5Q7 4-4 2Z" fill="url(#silver)" stroke="#999" stroke-width="1.500"/><path d="M-14 6Q0-8 14 6L8 14Q0 18-9 14Z" fill="#333"/><path d="M-13 9Q0 17 13 9L8 14Q0 18-9 14Z" fill="#aaa"/></svg>
    <svg viewBox="-21 -21 42 42"><g transform="rotate(38)" fill="#f4f4f4" stroke="#333" stroke-width="1.500"><rect x="-11" y="-15" width="22" height="30" rx="7"/><ellipse cy="-9" rx="9" ry="6"/><ellipse cy="-9" rx="5" ry="3"/><ellipse cy="9" rx="8" ry="5" stroke="#999"/></g></svg>
    <svg class="picked" viewBox="-21 -21 42 42"><g transform="rotate(38)"><rect x="-11" y="-15" width="22" height="30" rx="7" fill="#c01810" stroke="#500000"/><ellipse cy="-10" rx="9" ry="5" fill="#d83020"/><ellipse cy="-10" rx="5" ry="3" fill="#600"/></g></svg>
    <i class="bar wide"></i>
    <svg viewBox="-21 -21 42 42"><g transform="rotate(38)"><rect x="-11" y="-15" width="22" height="30" rx="7" fill="#ddd" stroke="#777"/></g><path d="M-10-8Q-2-17 6-15Q15-12 16-5Q15 3 9 9Z" fill="#58a820" stroke="#1c4a08"/><ellipse cx="6" cy="-8" rx="6" ry="4" transform="rotate(38 6-8)" fill="#2c6a10"/><path d="M-14-11L12 14" stroke="#111" stroke-width="1.500"/></svg>
    <svg viewBox="-21 -21 42 42"><ellipse cy="13" rx="14" ry="3" fill="#bbb"/><circle cy="-2" r="15" fill="url(#silver)" stroke="#666"/><path d="M0-17V13A15 15 0 0 1 0-17Z" fill="url(#amber)"/></svg>
    <i class="bar tight"></i>
    <svg class="gem" viewBox="-21 -21 42 42"><path d="M0-13L9-10L13 0L9 10L0 13L-9 10L-13 1L-10-9Z" fill="#6cb4f0" stroke="#183868" stroke-width="1.800"/><path d="M-7-7L2-10L7-5L-1 0Z" fill="#b8e0ff"/></svg><b class="drop last"></b>
  </div>
  <svg class="canvas" viewBox="953 296 953 684" width="953" height="684">
    <rect x="953" y="296" width="953" height="684" fill="#d4d0c8"/>
    <rect x="953" y="296" width="953" height="684" fill="url(#canvasGrid)"/>
    <rect x="953" y="296" width="953" height="47" fill="url(#hatch)"/><rect x="953" y="296" width="953" height="47" fill="url(#shade)"/>
    <path d="M953 343.300H1906" stroke="#222" stroke-width="1.600"/>
    <g transform="translate(960 380) scale(.33333)">
      <g class="wire">
        <path d="M490 112C570 112 575 240 655 240M520 256C590 256 585 298 655 298M520 356H655M862 270C1430 270 1640 192 2290 192M862 270C1200 270 1250 330 1590 330M862 270C1230 270 640 808 1010 808M1412 405C1500 405 1500 388 1590 388M1412 538C1500 538 1500 445 1590 445M1210 808C1260 808 1260 777 1310 777M1010 1137C1190 1137 1130 863 1308 863"/>
      </g>
      <g class="port"><circle cx="290" cy="112" r="9"/><circle cx="485" cy="112" r="9"/><circle cx="514" cy="256" r="9"/><circle cx="517" cy="356" r="9"/><circle cx="662" cy="240" r="9"/><circle cx="662" cy="298" r="9"/><circle cx="662" cy="356" r="9"/><circle cx="662" cy="413" r="9"/><circle cx="856" cy="270" r="9"/><circle cx="856" cy="386" r="9"/><circle cx="1407" cy="405" r="9"/><circle cx="1407" cy="538" r="9"/><circle cx="1016" cy="808" r="9"/><circle cx="1205" cy="808" r="9"/><circle cx="1313" cy="777" r="9"/><circle cx="1313" cy="863" r="9"/><circle cx="1004" cy="1137" r="9"/></g>
      <g class="node"><rect x="293" y="71" width="188" height="81" rx="7"/><rect x="664" y="206" width="189" height="242" rx="7"/><rect x="1018" y="767" width="183" height="83" rx="7"/><rect x="1316" y="727" width="252" height="186" rx="7"/></g>
      <g class="node"><rect x="43" y="227" width="468" height="58" rx="7"/><rect x="47" y="327" width="466" height="58" rx="7"/><rect x="935" y="376" width="468" height="58" rx="7"/><rect x="942" y="510" width="461" height="57" rx="7"/></g>
      <g class="node sel"><path d="M164 227H50Q43 227 43 234V278Q43 285 50 285H164ZM168 327H54Q47 327 47 334V378Q47 385 54 385H168ZM1057 376H942Q935 376 935 383V427Q935 434 942 434H1057ZM1050 510H949Q942 510 942 517V560Q942 567 949 567H1050Z"/></g>
      <path class="scale" d="M190 255H400M190 240V255M220 248V255M249 248V255M278 248V255M307 248V255M336 240V255M365 248V255M394 248V255M195 358H360M440 358H485M195 343V358M224 350V358M253 350V358M282 350V358M311 350V358M340 343V358M456 350V358M485 343V358M1086 406H1195M1262 406H1375M1086 392V406M1115 398V406M1144 398V406M1173 398V406M1290 398V406M1318 398V406M1346 398V406M1375 392V406M1077 540H1155M1240 540H1376M1077 524V540M1106 532V540M1136 532V540M1255 532V540M1286 532V540M1316 532V540M1346 532V540M1376 524V540"/>
      <path class="knob" d="M481 246L490 256L481 266L472 256ZM426 346L435 356L426 366L417 356ZM1204 396L1213 406L1204 416L1195 406ZM1225 528L1234 538L1225 548L1216 538Z"/>
      <g class="nt">
        <text x="312" y="117">O</text><text x="433" y="117">P</text><text class="bold" x="376" y="101" textLength="36">XZ</text>
        <text x="60" y="262" textLength="82">X Size</text><text x="66" y="363" textLength="78">Y Size</text><text x="403" y="259" textLength="52">100</text><text x="364" y="361" textLength="36">80</text>
        <text x="687" y="246">P</text><text x="686" y="306">X</text><text x="687" y="363">Y</text><text x="687" y="421">R</text><text x="801" y="276">R</text><text x="800" y="392">L</text>
        <text x="951" y="411" textLength="84">Count</text><text x="958" y="544" textLength="68">Seed</text><text x="1223" y="411" textLength="36">41</text><text x="1163" y="543" textLength="36">50</text>
        <text x="1041" y="815">E</text><text x="1152" y="815">S</text><text x="1399" y="783">S</text><text x="1382" y="869">uv</text>
      </g>
      <path d="M359 106H390V136H359ZM374 106V121H390" fill="#ffc420" stroke="#e05010" stroke-width="4"/>
      <rect x="727" y="299" width="54" height="54" rx="10" fill="#ccc" stroke="#111" stroke-width="6"/><path d="M740 312H768V340H740ZM754 312V326H768" fill="#ffb020" stroke="#d84010" stroke-width="4"/>
      <path d="M1077 780Q1110 785 1112 805L1130 808L1108 830L1077 835Z" fill="#ff9a10" stroke="#c04810" stroke-width="4"/>
      <rect x="1325" y="757" width="37" height="37" fill="#ddd" stroke="#555" stroke-width="4"/><path d="M1330 787H1336Q1344 740 1352 787H1358" fill="none" stroke="#333" stroke-width="4"/>
      <rect x="631" y="975" width="369" height="323" rx="9" fill="#8f8ea0" stroke="#444" stroke-width="4"/><rect x="647" y="992" width="338" height="288" fill="#c9c9d3" stroke="#222" stroke-width="5"/>
      <path d="M709 1028V1246M735 1028V1246M762 1028V1246M788 1028V1246M815 1028V1246M841 1028V1246M868 1028V1246M894 1028V1246M921 1028V1246M682 1050H947M682 1072H947M682 1094H947M682 1116H947M682 1137H947M682 1159H947M682 1181H947M682 1203H947M682 1225H947" stroke="#888" stroke-opacity=".7" stroke-width="2"/>
      <rect x="682" y="1028" width="265" height="218" fill="none" stroke="#111" stroke-width="5" stroke-dasharray="9 8"/>
      <rect x="682" y="1138" width="95" height="108" fill="#fff" fill-opacity=".7" stroke="#111" stroke-width="5"/>
      <path d="M655 1126L680 1138L655 1150ZM766 1273L778 1249L790 1273Z" fill="#000"/>
      <circle cx="778" cy="1138" r="11" fill="#ddd" stroke="#111" stroke-width="5"/><path d="M719 1082H835V1120H792L778 1133L764 1120H719Z" fill="#f2f2f2" stroke="#222" stroke-width="5"/>
      <text class="tiny" x="729" y="1109" textLength="92">0.36 ; 0.5</text>
    </g>
    <g transform="translate(1440 390) scale(.33333)">
      <g class="wire"><path d="M138 733C300 733 240 1008 415 1008M908 1072C970 1072 960 950 1022 950M912 1238C1050 1238 890 1008 1022 1008M645 1195L722 1210M695 1268H722"/></g>
      <g class="twin"><path id="lists" d="M352 386C420 386 420 273 487 273M352 386C400 386 450 390 490 400M352 386C560 386 620 498 875 498M352 386C730 386 30 922 410 922M700 360C860 360 690 105 855 105M1062 162C1250 162 680 440 875 440M1228 908C1470 908 630 556 878 556M620 1023C820 1023 820 893 1022 893M620 1023C665 1023 665 1072 712 1072"/></g>
      <g class="core"><use href="#lists"/></g>
      <g class="port"><circle cx="155" cy="300" r="9"/><circle cx="155" cy="358" r="9"/><circle cx="155" cy="415" r="9"/><circle cx="155" cy="473" r="9"/><circle cx="349" cy="386" r="9"/><circle cx="493" cy="274" r="9"/><circle cx="493" cy="332" r="9"/><circle cx="493" cy="389" r="9"/><circle cx="493" cy="447" r="9"/><circle cx="693" cy="361" r="9"/><circle cx="861" cy="105" r="9"/><circle cx="861" cy="162" r="9"/><circle cx="861" cy="220" r="9"/><circle cx="1055" cy="162" r="9"/><circle cx="881" cy="440" r="9"/><circle cx="881" cy="498" r="9"/><circle cx="881" cy="556" r="9"/><circle cx="1081" cy="456" r="9"/><circle cx="1081" cy="543" r="9"/><circle cx="131" cy="733" r="9"/><circle cx="131" cy="790" r="9"/><circle cx="131" cy="848" r="9"/><circle cx="418" cy="922" r="9"/><circle cx="418" cy="1009" r="9"/><circle cx="614" cy="908" r="9"/><circle cx="614" cy="966" r="9"/><circle cx="614" cy="1023" r="9"/><circle cx="717" cy="1072" r="9"/><circle cx="902" cy="1072" r="9"/><circle cx="1028" cy="893" r="9"/><circle cx="1028" cy="950" r="9"/><circle cx="1028" cy="1009" r="9"/><circle cx="1222" cy="908" r="9"/><circle cx="1222" cy="995" r="9"/><circle cx="640" cy="1196" r="9"/><circle cx="689" cy="1268" r="9"/><circle cx="726" cy="1210" r="9"/><circle cx="726" cy="1268" r="9"/><circle cx="908" cy="1239" r="9"/></g>
      <g class="node"><path d="M0 697H121Q128 697 128 704V876Q128 883 121 883H0" /><rect x="864" y="70" width="187" height="184" rx="7"/><rect x="884" y="408" width="194" height="184" rx="7"/><rect x="421" y="873" width="189" height="184" rx="7"/><rect x="72" y="1168" width="565" height="57" rx="7"/><rect x="129" y="1241" width="557" height="57" rx="7"/></g>
      <g class="node sel"><rect x="159" y="266" width="187" height="242" rx="7"/><rect x="496" y="240" width="193" height="242" rx="7"/><rect x="1031" y="859" width="188" height="186" rx="7"/><rect x="719" y="1032" width="180" height="81" rx="7"/><rect x="728" y="1176" width="178" height="128" rx="7"/><path d="M291 1168H79Q72 1168 72 1175V1218Q72 1225 79 1225H291ZM340 1241H136Q129 1241 129 1248V1291Q129 1298 136 1298H340Z"/></g>
      <ellipse cx="21" cy="798" rx="23" ry="17" fill="url(#orangeBall)" stroke="#c05010" stroke-width="4"/><path d="M26 790L40 764" stroke="#333" stroke-width="5"/>
      <rect x="219" y="354" width="58" height="58" fill="#e6e4e4" stroke="#c04030" stroke-width="4"/><path d="M229 366h1M248 362h1M266 366h1M235 382h1M254 378h1M245 392h1M268 390h1M230 402h1M252 404h1M266 402h1" stroke="#333" stroke-width="9" stroke-linecap="round"/>
      <path d="M585 358L563 340M585 358L586 334" stroke="#287818" stroke-width="10"/><path d="M563 338L584 336L585 356Z" fill="#48a030"/><path d="M585 358L613 348L600 372Z" fill="#d02060"/><path d="M583 358L570 376L580 384L594 370Z" fill="#4060d0"/><path d="M560 358L610 380M608 340L576 378" stroke="#222" stroke-width="4"/>
      <g fill="#f0f0f0" fill-opacity=".5" stroke="#555" stroke-width="5"><circle cx="942" cy="153" r="19"/><circle cx="960" cy="168" r="19"/></g><ellipse cx="953" cy="162" rx="7" ry="15" transform="rotate(20 953 162)" fill="#ff9010" stroke="#903000" stroke-width="3"/>
      <circle cx="977" cy="490" r="20" fill="url(#orangeBall)" stroke="#a05010" stroke-width="4"/><circle cx="961" cy="510" r="13" fill="url(#orangeBall)" stroke="#a05010" stroke-width="4"/>
      <path d="M512 966L489 942M512 966L518 940M512 966L492 988M512 966L535 984" stroke="#222" stroke-width="5"/><path d="M512 966L535 956" stroke="#a02020" stroke-width="5"/><g fill="#111"><circle cx="489" cy="942" r="6"/><circle cx="518" cy="940" r="6"/><circle cx="492" cy="988" r="6"/><circle cx="534" cy="984" r="9"/><circle cx="536" cy="956" r="5" fill="#a02020"/></g>
      <path d="M1089 923H1141V936H1089Z" fill="#eee" stroke="#111" stroke-width="4"/><path d="M1102 923V935M1115 923V935M1128 923V935" stroke="#111" stroke-width="5"/><path d="M1090 936H1141Q1140 950 1126 955V962H1105V955Q1091 950 1090 936Z" fill="#10c070" stroke="#065030" stroke-width="3"/><path d="M1087 967H1148V977H1087Z" fill="#999" stroke="#222" stroke-width="3"/>
      <path d="M789 1062V1092M834 1062V1092" stroke="#222" stroke-width="3"/><path d="M789 1093H834" stroke="#20c890" stroke-width="11"/><path d="M782 1093H790M834 1093H842" stroke="#222" stroke-width="6"/>
      <path d="M800 1236V1260M832 1236V1260M788 1260H845" stroke="#222" stroke-width="4"/><circle cx="800" cy="1242" r="5"/><circle cx="832" cy="1242" r="5"/><path d="M802 1260H830" stroke="#20e060" stroke-width="10"/>
      <path class="scale" d="M316 1198H450M560 1198H606M316 1182V1198M345 1190V1198M374 1190V1198M403 1190V1198M432 1190V1198M577 1190V1198M606 1182V1198M367 1270H470M550 1270H655M367 1256V1270M396 1262V1270M425 1262V1270M454 1262V1270M570 1262V1270M598 1262V1270M626 1262V1270M655 1256V1270"/>
      <g class="knob"><circle cx="521" cy="1196" r="9"/><circle cx="484" cy="1269" r="9"/></g>
      <g class="nt">
        <text x="183" y="306">R</text><text x="178" y="364">N</text><text x="184" y="421">S</text><text x="184" y="477">P</text><text x="297" y="392">P</text>
        <text x="524" y="279">P</text><text x="523" y="338">R</text><text x="523" y="395">B</text><text x="516" y="453">Pl</text><text x="638" y="368">C</text>
        <text x="883" y="111">A</text><text x="886" y="168">B</text><text x="886" y="225">P</text><text x="1001" y="168">R</text>
        <text x="904" y="448">G</text><text x="906" y="505">C</text><text x="911" y="562">F</text><text x="1024" y="462">G</text><text x="1022" y="549">X</text>
        <text x="74" y="738">P</text><text x="74" y="796">N</text><text x="74" y="852">F</text><text x="442" y="927">P</text><text x="440" y="1015">C</text><text x="557" y="914">P</text><text x="557" y="974">i</text><text x="557" y="1030">D</text>
        <text x="740" y="1078">N</text><text x="859" y="1078">I</text><text x="1050" y="900">V</text><text x="1054" y="956">S</text><text x="1054" y="1015">T</text><text x="1169" y="914">R</text><text x="1168" y="1001">C</text>
        <text x="748" y="1217">A</text><text x="750" y="1274">B</text><text x="865" y="1245">I</text>
        <text x="90" y="1202" textLength="178">Domain start</text><text x="148" y="1275" textLength="168">Domain end</text><text x="451" y="1201" textLength="44">0.7</text><text x="503" y="1274" textLength="44">0.4</text>
        <text class="mini" x="780" y="1053">min</text><text class="mini" x="804" y="1068">max</text><text class="bold" x="792" y="1229">0</text><text class="bold" x="824" y="1229">1</text>
      </g>
    </g>
    <path d="M1820 919L1829 912L1829 916L1848 905L1846 909L1857 904L1850 913L1839 917L1832 926L1830 921L1826 925L1826 917Z" fill="#111"/>
    <circle cx="1860" cy="936" r="30.500" fill="#555"/><circle cx="1860" cy="935" r="29" fill="url(#wheel)" stroke="#fff"/><circle cx="1860" cy="935" r="24" fill="none" stroke="#999" stroke-dasharray="1 17.850" stroke-width="9"/><circle cx="1860" cy="935" r="22" fill="url(#wheel)"/>
    <path d="M953 939H964V979H953Z" fill="#777" stroke="#111" stroke-width="1.500"/>
  </svg>
  <footer class="g-status"><svg width="24" height="26" viewBox="0 0 24 26"><ellipse cx="12" cy="13" rx="11.500" ry="12" fill="#0c3a9c"/><circle cx="12" cy="13" r="8" fill="#28a0d8"/><path d="M10 4H14V14H10ZM10 17H14V21H10Z" fill="#fff" stroke="#024"/></svg><span>Autosave complete (19 seconds ago)</span><em>0.9.0076</em><svg width="18" height="18"><path d="M14 4h2M10 9h2M14 9h2M5 14h2M10 14h2M14 14h2" stroke="#aaa" stroke-width="2"/></svg></footer>
</section>

<footer class="taskbar">
  <div class="start"><svg width="26" height="26"><path d="M1 4.500L11 3V12H1ZM12.500 2.800L25 1V12H12.500ZM1 13.500H11V22.500L1 21ZM12.500 13.500H25V25L12.500 22.800Z" fill="#fff"/></svg></div>
  <div class="search">Search Windows</div>
  <div class="apps">
    <div><svg viewBox="0 0 40 40"><path d="M11 11H28V29H11ZM8 11H5V29H8M31 11H34V29H31" fill="none" stroke="#ddd" stroke-width="1.600"/></svg></div>
    <div class="run duo"><svg viewBox="0 0 40 40"><path d="M4 5H15L18 9H36V34H4Z" fill="#ffe08a"/><path d="M4 5H15V9H4Z" fill="#e8b020"/><path d="M9 35V20H31V35H26V28H14V35Z" fill="#3aa8e0"/></svg></div>
    <div><svg viewBox="0 0 40 40"><path d="M17 23Q3 18 6 9Q12-3 20 6L25 22Z" fill="#eee" stroke="#999"/><path d="M14 21L19 25L24 21L19 17Z" fill="#d83030"/><path d="M8 6L18 22M15 4L21 20" stroke="#ccc" stroke-width="2"/><ellipse cx="24" cy="32" rx="3.500" ry="6" fill="none" stroke="#2a78c8" stroke-width="3"/><ellipse cx="31" cy="26" rx="3.500" ry="6" transform="rotate(-40 31 26)" fill="none" stroke="#2a78c8" stroke-width="3"/></svg></div>
    <div class="run"><svg viewBox="0 0 40 40"><circle cx="19" cy="20" r="18" fill="#e8c020"/><path d="M19 20L3 12Q9 1 20 2Q31 3 36 12Z" fill="#dc4030"/><path d="M3 11L17 28L15 37Q1 32 1 19Z" fill="#2c9c48"/><circle cx="19" cy="20" r="8" fill="#3a80e8" stroke="#fff" stroke-width="2.500"/><circle cx="28" cy="29" r="11" fill="#7a6a48"/><path d="M19 38Q17 20 28 19Q38 20 36 38Z" fill="#222"/><circle cx="28" cy="27" r="6" fill="#d8a888"/><path d="M20 39Q28 30 37 39Z" fill="#a8a090"/></svg></div>
    <div><svg viewBox="0 0 40 40"><path d="M3 5H19V20H3ZM21 5H37V20H21ZM12 21H28V36H12Z" fill="#f0f0f0" stroke="#999"/><text class="tile" x="8" y="16">u</text><text class="tile" x="28" y="16">i</text><text class="tile" x="17" y="32">n</text></svg></div>
    <div class="run"><svg viewBox="0 0 40 40"><rect x="2" y="2" width="36" height="36" rx="3" fill="#289cdc"/><path d="M8 7H32V33H8Z" fill="#0a2c40"/><path d="M18 12H13V28H18M22 12H27V28H22" fill="none" stroke="#fff" stroke-width="4"/></svg></div>
    <div class="run"><svg viewBox="0 0 40 40"><path d="M2 2H38V38H2Z" fill="#eef4f8"/><path d="M13 7L30 5V12L20 13V18L28 17V23L20 24V32L13 34Z" fill="#e89030"/><text class="f360" x="21" y="35">360</text></svg></div>
    <div class="run active"><svg viewBox="0 0 24 24"><use href="#rhino"/></svg></div>
  </div>
  <div class="tray">
    <svg width="140" height="30" fill="none" stroke="#e8e8e8" stroke-width="1.600"><path d="M10 19L18 11L26 19"/><path d="M47 10H66V22H50V17M66 13H69V19H66M43 7V13Q46 17 49 13V7M46 15V20"/><path d="M84 24Q84 10 99 8M88 25Q88 15 99 13M92 25Q92 19 99 18M97 25H99V23"/><path d="M116 12H120L126 7V24L120 19H116ZM129 12Q132 15 129 19M132 10Q136 15 132 21" /></svg>
    <span class="lang">DEU</span>
    <div class="clock"><span>20:20</span><span>21/11/2017</span></div>
    <svg width="44" height="44"><path d="M3 6H27V25H13L9 31V25H3Z" fill="#fff"/><path d="M7 11H23M7 15H23M7 19H18" stroke="#222" stroke-width="1.500"/><circle cx="26" cy="29" r="11.500" fill="#333" stroke="#888" stroke-width="1.500"/><text class="count" x="26" y="34">3</text></svg>
  </div>
</footer>
</body>
</html>
```
FILE: styles.css
```css
* { box-sizing: border-box; }
body { margin: 0; width: 1920px; height: 1080px; overflow: hidden; position: relative; background: #fff; font-family: "Liberation Sans", Arial, sans-serif; }
.defs { position: absolute; }
svg { display: block; flex: none; }
p { margin: 0; }
i, em { font-style: normal; }

/* Rhino window */
.rhino { width: 1920px; height: 1020px; display: flex; flex-direction: column; background: #dfe2ea; overflow: hidden; }
.rhino > * { flex: none; }
.r-title { height: 36px; padding: 0 2px 0; display: flex; align-items: center; gap: 5px; background: #fff; font: 17.500px "Open Sans", sans-serif; letter-spacing: -.22px; color: #929292; }
.r-menu { height: 26px; background: #fff; display: grid; grid-template-columns: 48px 50px 59px 67px 80px 60px 65px 106px 103px 63px 82px 77px 71px 50px; padding: 1px 0 0 11px; align-items: center; font: 16.300px "Open Sans", sans-serif; color: #7b7b7b; white-space: nowrap; }
.command { margin: 8px 0 5px 5px; border-left: 2px solid #b9bfcd; padding-left: 3px; height: 70px; display: flex; flex-direction: column; color: #2b2b33; }
.command p { background: #fff; height: 42px; padding: 1px 2px; font-size: 17.500px; letter-spacing: .8px; }
.command .prompt { height: 28px; border-top: 2px solid #a9b0c2; font-weight: bold; letter-spacing: 0; padding-top: 1px; color: #111; }
.band { border-top: 1.500px solid #b9bfcd; margin-left: 2px; padding: 6px 0 0 8px; height: 84px; }
.band .icons { height: 54px; display: flex; background: linear-gradient(#f7f8fa, #dfe2ea); padding-top: 2px; }
.icons svg, .palette > svg, .group svg { width: 42px; height: 42px; }
.more { background: linear-gradient(135deg, transparent 50%, #6d6d6d 50%) 32px 32px / 9px 9px no-repeat; }
.r-tabs { display: flex; height: 22px; font-size: 16.200px; color: #222a3c; border-bottom: 1px solid #b0b7c8; line-height: 22px; white-space: nowrap; }
.r-tabs span { position: relative; z-index: 0; flex: none; height: 22px; background: #d3d9ea; border: solid #b0b7c8; border-width: 1px 1.500px 0 0; border-radius: 0 6px 0 0; margin-left: 7px; }
.r-tabs span::before { content: ""; position: absolute; z-index: -1; left: -6px; top: -1px; width: 14px; height: 22px; background: inherit; border: solid #b0b7c8; border-width: 1px 0 0 1.500px; transform: skewX(-28deg); }
.r-tabs span:nth-child(1) { width: 87px; padding-left: 7px; }
.r-tabs span:nth-child(2) { width: 80px; padding-left: 5px; }
.r-tabs span:nth-child(3) { width: 85px; padding-left: 6px; }
.r-tabs span:nth-child(4) { width: 72px; padding-left: 5px; }
.r-tabs span:nth-child(5) { width: 68px; padding-left: 6px; }
.r-tabs span:nth-child(6) { width: 135px; padding-left: 3px; letter-spacing: .15px; }
.r-tabs span:nth-child(7) { width: 75px; padding-left: 1px; }
.r-tabs span:nth-child(8) { width: 92px; padding-left: 4px; }
.r-tabs span:nth-child(9) { width: 108px; padding-left: 4px; }
.r-tabs span:nth-child(10) { width: 130px; padding-left: 3px; }
.r-tabs .on { background: #fafbfc; height: 23px; }
.band.second { height: 60px; padding-top: 5px; }
.band.second .icons { height: 54px; padding-top: 0; background: linear-gradient(#fff, #dfe2ea); }
.work { display: flex; height: 669px; }
.palette { width: 97px; padding: 12px 0 0 1px; display: grid; grid-template-columns: 42px 42px; grid-auto-rows: 42px; align-content: start; background: linear-gradient(#aeb5c6, #aeb5c6) 5px 6px / 82px 1px no-repeat, linear-gradient(#aeb5c6, #aeb5c6) 5px 9px / 82px 1px no-repeat; }
.stage { flex: 1; position: relative; background: #9ca3ab; border-top: 1px solid #8a93a0; }
.view-label { position: absolute; left: 0; top: 0; width: 82px; height: 27px; padding: 6px 12px; background: #8ca4c2; font-size: 16px; color: #1c2430; letter-spacing: .9px; display: flex; justify-content: space-between; }
.view-label i { border: solid transparent; border-width: 7px 6px 0; border-top-color: #111; margin: 6px -10px 0 0; height: 0; position: relative; }
.view-label i::before { content: ""; position: absolute; left: -8px; top: -14px; width: 2px; height: 22px; background: #111; }
.viewport { display: block; }
.cells { fill: none; stroke: #a00c10; stroke-width: 1.500; }
.cells g { stroke-width: 4.400; }
.axis { font: bold 16px "Liberation Sans", sans-serif; fill: #666; }
.view-tabs { height: 30px; margin-top: 2px; display: flex; padding-left: 97px; font-size: 16.500px; color: #111; line-height: 32px; }
.view-tabs span { text-align: center; background: #d3d9ea; border-right: 1px solid #b4bbcb; clip-path: polygon(0 0, 100% 0, 100% 100%, 14px 100%, 0 15px); }
.view-tabs span:nth-child(1) { width: 115px; letter-spacing: .5px; padding-left: 7px; }
.view-tabs span:nth-child(2) { width: 48px; padding-left: 13px; letter-spacing: .5px; }
.view-tabs span:nth-child(3) { width: 80px; margin-left: -4px; background: #fff; letter-spacing: .9px; padding-left: 22px; clip-path: polygon(0 0, 100% 0, 100% 100%, 18px 100%); }
.view-tabs span:nth-child(4) { width: 69px; letter-spacing: .7px; padding-left: 10px; }
.view-tabs .plus { width: 47px; background: #e6e8ee; color: #666; padding-left: 8px; }
.r-status { height: 30px; border-top: 2px solid #b4bbcb; display: grid; grid-template-columns: 85px 132px 132px 132px 132px 259px 200px; font-size: 17.500px; letter-spacing: .4px; color: #16161e; line-height: 28px; text-align: center; }
.r-status span { border-right: 2px solid #b4bbcb; }
.r-status .layer { text-align: left; display: flex; align-items: center; gap: 2px; padding-left: 5px; }
.r-status .layer i { width: 22px; height: 22px; background: #000; }
.r-status .snap { text-align: left; padding-left: 16px; }

/* sliver of the Rhino window right of Grasshopper */
.edge { position: absolute; left: 1909px; top: 0; width: 11px; height: 1020px; display: flex; flex-direction: column; background: linear-gradient(90deg, #b8bcc5, #dfe2ea); }
.edge i:nth-child(1) { height: 62px; background: linear-gradient(90deg, #ccc, #fff); }
.edge i:nth-child(2) { margin-top: 50px; height: 28px; border: 1.500px solid #999fac; border-width: 1.500px 1.500px 1.500px 0; }
.edge i:nth-child(3) { margin-top: 34px; height: 122px; border: solid #a9b0c2; border-width: 1px 0; }
.edge i:nth-child(4) { margin-top: 130px; height: 530px; border: 1px solid #a9b0c2; background: #c6c9d0; }

/* Grasshopper window */
.gh { position: absolute; left: 950px; top: 0; width: 959px; height: 1017px; border: 1.500px solid #1883d7; background: #f0f0f0; display: flex; flex-direction: column; padding: 0 2px; box-shadow: 0 3px 14px rgba(0,0,0,.35); }
.g-title { margin: 0 -2px; height: 46px; background: #fff; display: flex; align-items: center; justify-content: space-between; padding: 0 23px 0 12px; font: 17px "Open Sans", sans-serif; color: #111; letter-spacing: 0; }
.g-title svg { margin-top: -1px; }
.g-menu { height: 36px; display: grid; grid-template-columns: 52px 56px 63px 80px 85px 60px 1fr; padding: 0 16px 0 22px; align-items: center; background: linear-gradient(90deg, #f0f0f0, #fcfcfc); font-size: 15.700px; letter-spacing: -.15px; color: #1c1c24; margin: 0 -2px; }
.g-menu b { font-weight: normal; text-align: right; }
.g-tabs { height: 34px; margin: 0 -1px; display: grid; grid-template-columns: 66px 62px 51px 52px 51px 47px 59px 42px 58px 51px 49px 108px 98px 81px 40px; font-size: 16.300px; color: #858585; line-height: 37px; border-bottom: 1px solid #aaa; }
.g-tabs .on { width: 56px; height: 35px; line-height: 30px; padding-left: 13px; background: linear-gradient(#fff, #fff 50%, #dadada); border: 1px solid #aaa; border-bottom: 0; border-radius: 9px 9px 0 0; color: #111; font-size: 16px; }
.ribbon { height: 130px; display: flex; align-items: flex-start; gap: 5px; padding: 4px 0 0 3px; background: linear-gradient(#d6d6d6, #f0f0f0); border-radius: 0 12px 0 0; }
.panel { height: 109px; border: 1.500px solid #999; border-radius: 6px; background: linear-gradient(#dadada, #efefef); overflow: hidden; display: flex; flex-direction: column; justify-content: space-between; flex: none; }
.panel:nth-child(1) { width: 331px; } .panel:nth-child(2) { width: 91px; } .panel:nth-child(3) { width: 205px; } .panel:nth-child(4) { width: 163px; }
.groups { display: flex; gap: 15px; padding-left: 1px; }
.group { display: grid; grid-template-rows: 42px 42px; grid-auto-flow: column; position: relative; padding-top: 1px; flex: none; }
.group + .group::before { content: ""; position: absolute; left: -8px; top: 6px; width: 1px; height: 76px; background: #bbb; border-right: 1px solid #fff; }
.panel footer { height: 21px; margin: 0 -1px -1px; background: #1e1e1e; color: #eee; font-size: 15px; line-height: 19px; text-align: center; position: relative; padding-right: 17px; letter-spacing: .2px; }
.panel:nth-child(2) footer { padding-right: 16px; }
.panel:nth-child(3) footer { padding-right: 14px; }
.panel footer i { position: absolute; right: 4px; top: 5px; width: 10px; height: 10px; background: #999; clip-path: polygon(35% 0, 65% 0, 65% 45%, 100% 45%, 50% 100%, 0 45%, 35% 45%); }
.key { fill: url(#btnGrey); stroke: #222; stroke-width: 1.600; }
.glyph { font: bold 23px "Liberation Serif", serif; fill: #fff; text-anchor: middle; }
.slim { font-size: 21px; letter-spacing: -2px; fill: #ddd; }
.g-tools { height: 49px; border-top: 2px solid #888; background: linear-gradient(#fff, #f1f1f1); display: flex; align-items: center; padding: 0 0 0 3px; }
.g-tools > svg { width: 42px; height: 42px; }
.g-tools > svg:nth-child(2) { margin-left: 4px; }
.g-tools .bar { width: 1.500px; height: 32px; background: #ccc; margin: 0 7px; }
.g-tools .first { margin: 0 7px 0 6px; }
.g-tools .wide { margin: 0 10px 0 9px; }
.g-tools .tight { margin: 0 3px 0 6px; }
.combo { width: 105px; height: 37px; border: 1.500px solid #999; background: #fff; display: flex; align-items: center; justify-content: space-between; padding: 0 5px 0 4px; font: 17px "Liberation Sans", sans-serif; letter-spacing: .3px; color: #333; }
.drop { border: solid transparent; border-width: 4px 4px 0; border-top-color: #111; margin-left: 4px; }
.g-tools .eye { margin-left: 7px; } .g-tools .eye + .drop { margin-left: 6px; } .g-tools .pen { margin-left: 5px; }
.space { flex: 1; }
.g-tools .picked { border: 1.500px solid #55a8f0; background: #f0f6fc; margin: 0 3px 0 1px; }
.g-tools .gem { margin-left: -2px; }
.g-tools .last { margin: 0 8px 0 1px; }
.canvas { font-family: "Noto Sans", sans-serif; }
.wire { fill: none; stroke: #595853; stroke-width: 7; }
.twin { fill: none; stroke: #64635e; stroke-width: 14; }
.core { fill: none; stroke: #a9a69f; stroke-width: 5; }
#lists { fill: none; stroke: inherit; stroke-width: inherit; }
.port { fill: #eee; stroke: #222; stroke-width: 5; }
.node { fill: url(#nodeLight); stroke: #444; stroke-width: 4.500; }
.sel { fill: url(#nodeDark); }
.scale { fill: none; stroke: #aaa; stroke-width: 3; }
.knob { fill: #eee; stroke: #111; stroke-width: 4.500; }
.nt text { font-size: 29px; fill: #424248; }
.nt .bold { font-size: 25px; font-weight: bold; fill: #222; }
.nt .mini { font-size: 18px; font-weight: bold; fill: #111; }
.tiny { font-size: 21px; fill: #444; }
.g-status { flex: 1; display: flex; align-items: center; gap: 5px; padding: 5px 0 0 2px; background: linear-gradient(90deg, #f0f0f0, #fbfbfb); font-size: 16px; letter-spacing: 0; color: #222; }
.g-status em { margin: 0 2px 0 auto; color: #8a8a8a; }

/* taskbar */
.taskbar { position: absolute; left: 0; top: 1020px; width: 1920px; height: 60px; display: flex; background: radial-gradient(ellipse 140px 110px at 1379px 10px, #211512 98%, transparent 100%), linear-gradient(90deg, #0a1614 588px, #250e17 588px, #200c14 960px, #0a1614 1010px); color: #eee; font-family: "Open Sans", sans-serif; border-top: 1px solid #0c0c0c; }
.start { width: 72px; display: grid; place-items: center; }
.search { width: 516px; background: #333; color: #a5a5a5; font-size: 18.500px; line-height: 60px; padding-left: 12px; }
.apps { display: flex; }
.apps div { width: 74.500px; display: grid; place-items: center; position: relative; margin-right: .700px; }
.apps svg { width: 36px; height: 36px; }
.apps .run::after { content: ""; position: absolute; left: 8px; right: 6px; bottom: 0; height: 3px; background: #76b9ed; }
.apps .duo::after { background: linear-gradient(90deg, #76b9ed 78%, #4a7ba5 78%); }
.apps .active { background: #3b4645; width: 72px; margin-left: 2px; }
.apps .active::after { left: 0; right: 0; }
.tile { font: bold 12px "Liberation Sans", sans-serif; fill: #e02020; }
.f360 { font: bold 9px "Liberation Sans", sans-serif; fill: #2090c8; }
.tray { margin-left: auto; display: flex; align-items: center; padding-right: 20px; }
.lang { margin-left: 14px; width: 48px; font-size: 17px; letter-spacing: -.2px; }
.clock { width: 104px; display: flex; flex-direction: column; align-items: center; font-size: 18px; line-height: 28px; letter-spacing: -.3px; margin-right: 22px; }
.count { font: 15px "Open Sans", sans-serif; fill: #fff; text-anchor: middle; }
```
